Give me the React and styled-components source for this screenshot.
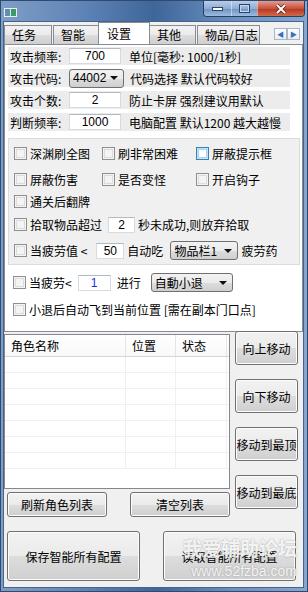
import styled, { createGlobalStyle } from 'styled-components'

const Global = createGlobalStyle`
    html, body { margin: 0; padding: 0; background: #6f93c2; }
    body { font-family: "Noto Sans CJK SC", "Liberation Sans", sans-serif; font-size: 12px; color: #000; }
    * { box-sizing: border-box; }
`;

const Window = styled.div`
    width: 308px;
    height: 592px;
    display: flex;
    flex-direction: column;
    background: linear-gradient(90deg, #7f9ec6 0%, #5a80b3 30%, #3f6699 50%, #6a8ec0 75%, #86a6cf 100%);
    border: 1px solid #2f4a6e;
    overflow: hidden;
`;

const TitleBar = styled.div`
    height: 20px;
    display: flex;
    justify-content: space-between;
    align-items: flex-start;
    padding-left: 3px;
`;

const AppIcon = styled.div`
    margin-top: 7px;
    width: 13px;
    height: 9px;
    background: linear-gradient(90deg, #5d8fb0 0 45%, #d9e4ea 45% 55%, #3d9a63 55%);
    border: 1px solid #e9eef3;
`;

const Controls = styled.div`
    display: flex;
    margin-right: 2px;
    border: 1px solid #26405f;
    border-top: none;
    border-radius: 0 0 4px 4px;
    overflow: hidden;
    height: 16px;
`;

const Ctrl = styled.div`
    width: ${p => p.$w}px;
    display: flex;
    align-items: center;
    justify-content: center;
    border-left: 1px solid rgba(255,255,255,0.45);
    background: ${p => p.$close
        ? 'linear-gradient(#e39b8e, #c9503c 50%, #b33620 51%, #d06a4d)'
        : 'linear-gradient(#b9cde6, #8eaed6 50%, #6e92c4 51%, #9cbbe0)'};
    &:first-child { border-left: none; }
`;

const Client = styled.div`
    flex: 1;
    margin: 0 3px 3px 2px;
    background: #f0f0f0;
    border: 1px solid #44648c;
    display: flex;
    flex-direction: column;
`;

const TabStrip = styled.div`
    height: 22px;
    display: flex;
    align-items: flex-end;
    position: relative;
`;

const Tab = styled.div`
    height: ${p => p.$active ? 22 : 19}px;
    width: ${p => p.$w}px;
    margin-right: ${p => p.$active ? -1 : 1}px;
    margin-left: ${p => p.$active ? -2 : 0}px;
    padding-left: ${p => p.$active ? 8 : 7}px;
    display: flex;
    align-items: center;
    border: 1px solid #898c95;
    border-bottom: none;
    background: ${p => p.$active ? '#fff' : 'linear-gradient(#f2f2f2, #ebebeb 50%, #dddddd 51%, #cfcfcf)'};
    position: relative;
    z-index: ${p => p.$active ? 2 : 1};
    font-size: 12px;
    line-height: 1;
`;

const Arrows = styled.div`
    margin-left: auto;
    margin-right: 3px;
    margin-bottom: 4px;
    display: flex;
`;

const ArrowBtn = styled.div`
    width: 13px;
    height: 12px;
    border: 1px solid #a7b6c9;
    background: linear-gradient(#fbfcfd, #e8eef5);
    color: #3b6fb3;
    font-size: 7px;
    display: flex;
    align-items: center;
    justify-content: center;
`;

const TabPage = styled.div`
    height: 288px;
    background: #fff;
    border: 1px solid #898c95;
    display: flex;
    flex-direction: column;
    padding: 2px 2px 0 3px;
`;

const Rows = styled.div`
    display: flex;
    flex-direction: column;
    gap: 4px;
    padding-right: 10px;
`;

const Row = styled.div`
    height: 18px;
    display: flex;
    align-items: center;
    background: #ececec;
`;

const Label = styled.span`
    width: ${p => p.$w || 61}px;
    padding-left: 2px;
    white-space: nowrap;
`;

const Edit = styled.div`
    width: ${p => p.$w}px;
    height: ${p => p.$h || 16}px;
    background: #fff;
    border: 1px solid #d5dbe2;
    border-top-color: #b4b8bf;
    display: flex;
    align-items: center;
    justify-content: center;
    font-family: "Liberation Sans", "DejaVu Sans", sans-serif;
    font-size: 12px;
    color: ${p => p.$blue ? '#1a32d6' : '#000'};
    margin: 0 ${p => p.$mr ?? 8}px 0 ${p => p.$ml ?? 0}px;
    flex: none;
`;

const Combo = styled.div`
    width: ${p => p.$w}px;
    height: 19px;
    border: 1px solid #707070;
    border-radius: 3px;
    background: linear-gradient(#f2f2f2, #ebebeb 50%, #dddddd 51%, #cfcfcf);
    display: flex;
    align-items: center;
    padding-left: 3px;
    padding-right: 5px;
    margin: 0 ${p => p.$mr ?? 6}px 0 ${p => p.$ml ?? 0}px;
    font-family: ${p => p.$latin ? '"Liberation Sans", sans-serif' : 'inherit'};
    font-size: 12px;
    flex: none;
    &::after {
        content: '';
        margin-left: auto;
        border-left: 4px solid transparent;
        border-right: 4px solid transparent;
        border-top: 4px solid #111;
    }
`;

const Desc = styled.span`
    white-space: nowrap;
`;

const CheckPanel = styled.div`
    margin-top: 7px;
    height: 127px;
    background: #f0f0f0;
    border: 1px solid #dcdcdc;
    padding: 8px 0 0 5px;
    display: flex;
    flex-direction: column;
`;

const CheckGrid = styled.div`
    display: grid;
    grid-template-columns: 88px 94px auto;
    row-gap: 13px;
    margin-bottom: 9px;
`;

const CheckLine = styled.div`
    display: flex;
    align-items: center;
    height: ${p => p.$h || 13}px;
    margin-bottom: ${p => p.$mb || 0}px;
    white-space: nowrap;
`;

const Box = styled.span`
    width: 13px;
    height: 13px;
    flex: none;
    margin-right: 3px;
    border: 1px solid ${p => p.$hover ? '#3c7fb1' : '#8e8f8f'};
    background: ${p => p.$hover ? '#fff' : '#f4f4f4'};
    box-shadow: inset 0 0 0 1px ${p => p.$hover ? '#c3e3f8' : '#f4f4f4'}, inset 0 0 0 2px ${p => p.$hover ? '#a8d5f5' : '#dcdcdc'};
`;

const Section = styled.div`
    padding: 9px 0 0 5px;
    display: flex;
    flex-direction: column;
    gap: 10px;
`;

const Lower = styled.div`
    display: flex;
    padding: 2px 5px 0 0;
    gap: 5px;
`;

const ListCol = styled.div`
    width: 227px;
    display: flex;
    flex-direction: column;
`;

const ListView = styled.div`
    height: 155px;
    background: #fff;
    border: 1px solid #828790;
    overflow: hidden;
`;

const Header = styled.div`
    height: 22px;
    display: grid;
    grid-template-columns: 121px 50px 51px auto;
    background: linear-gradient(#fff, #f7f8f9);
    border-bottom: 1px solid #d5d5d5;
`;

const HeadCell = styled.div`
    padding-left: 6px;
    display: flex;
    align-items: center;
    border-right: 1px solid #e5e5e5;
`;

const GridRow = styled.div`
    height: 16px;
    display: grid;
    grid-template-columns: 121px 50px 51px auto;
    border-bottom: 1px solid #f0f0f0;
`;

const GridCell = styled.div`
    border-right: 1px solid #f0f0f0;
`;

const ListButtons = styled.div`
    display: flex;
    justify-content: space-between;
    margin-top: 3px;
    padding-left: 3px;
`;

const Button = styled.div`
    width: ${p => p.$w}px;
    height: ${p => p.$h}px;
    border: 1px solid #707070;
    border-radius: 3px;
    background: linear-gradient(#f2f2f2, #ebebeb 50%, #dddddd 51%, #cfcfcf);
    box-shadow: inset 0 0 0 1px #fcfcfc;
    display: flex;
    align-items: center;
    justify-content: center;
    white-space: nowrap;
    font-size: 12px;
    position: relative;
    flex: none;
`;

const SideButtons = styled.div`
    margin-top: -3px;
    display: flex;
    flex-direction: column;
    gap: 14px;
`;

const BigRow = styled.div`
    display: flex;
    justify-content: space-between;
    padding: 14px 7px 0 3px;
`;

const Watermark = styled.div`
    position: absolute;
    right: -2px;
    top: 4px;
    width: 112px;
    display: flex;
    flex-direction: column;
    align-items: flex-end;
    color: rgba(255,255,255,0.85);
    text-shadow: 0 0 2px rgba(120,120,120,0.6);
    pointer-events: none;
`;

const WmBig = styled.span`
    font-size: 19px;
    font-weight: bold;
    line-height: 24px;
`;

const WmSmall = styled.span`
    font-family: "Liberation Sans", sans-serif;
    font-size: 14px;
    line-height: 16px;
    margin-top: 3px;
`;

const CheckItem = ({ label, hover }) => (
    <CheckLine><Box $hover={hover} />{label}</CheckLine>
)

const App = () => {
    const rows = [1, 2, 3, 4, 5, 6, 7]
    return (
        <Window>
            <Global />
            <TitleBar>
                <AppIcon />
                <Controls>
                    <Ctrl $w={27}><svg width="11" height="4"><rect x="0.5" y="0.5" width="10" height="3" fill="#fff" stroke="#2c4468" /></svg></Ctrl>
                    <Ctrl $w={26}><svg width="11" height="9"><rect x="0.5" y="0.5" width="10" height="8" fill="none" stroke="#2c4468" /><rect x="1.5" y="1.5" width="8" height="6" fill="none" stroke="#c7d7ea" /></svg></Ctrl>
                    <Ctrl $w={47} $close><svg width="12" height="10" viewBox="0 0 12 10"><path d="M2 1 L10 9 M10 1 L2 9" stroke="#5a1a10" strokeWidth="3.4" /><path d="M2 1 L10 9 M10 1 L2 9" stroke="#fff" strokeWidth="2" /></svg></Ctrl>
                </Controls>
            </TitleBar>
            <Client>
                <TabStrip>
                    <Tab $w={48}>任务</Tab>
                    <Tab $w={46}>智能</Tab>
                    <Tab $w={52} $active>设置</Tab>
                    <Tab $w={47}>其他</Tab>
                    <Tab $w={63}>物品/日志</Tab>
                    <Arrows>
                        <ArrowBtn>◀</ArrowBtn>
                        <ArrowBtn>▶</ArrowBtn>
                    </Arrows>
                </TabStrip>
                <TabPage>
                    <Rows>
                        <Row><Label>攻击频率:</Label><Edit $w={52}>700</Edit><Desc>单位[毫秒: 1000/1秒]</Desc></Row>
                        <Row><Label>攻击代码:</Label><Combo $w={55} $latin>44002</Combo><Desc>代码选择 默认代码较好</Desc></Row>
                        <Row><Label>攻击个数:</Label><Edit $w={52}>2</Edit><Desc>防止卡屏 强烈建议用默认</Desc></Row>
                        <Row><Label>判断频率:</Label><Edit $w={52}>1000</Edit><Desc>电脑配置 默认1200 越大越慢</Desc></Row>
                    </Rows>
                    <CheckPanel>
                        <CheckGrid>
                            <CheckItem label="深渊刷全图" />
                            <CheckItem label="刷非常困难" />
                            <CheckItem label="屏蔽提示框" hover />
                            <CheckItem label="屏蔽伤害" />
                            <CheckItem label="是否变怪" />
                            <CheckItem label="开启钩子" />
                        </CheckGrid>
                        <CheckLine $mb={10}><Box />通关后翻牌</CheckLine>
                        <CheckLine $mb={13}><Box />拾取物品超过<Edit $w={27} $ml={6} $mr={3}>2</Edit>秒未成功,则放弃拾取</CheckLine>
                        <CheckLine><Box />当疲劳值 &lt;<Edit $w={28} $ml={9} $mr={3}>50</Edit>自动吃<Combo $w={68} $ml={7} $mr={3}>物品栏1</Combo>疲劳药</CheckLine>
                    </CheckPanel>
                    <Section>
                        <CheckLine $h={17}><Box />当疲劳&lt;<Edit $w={33} $ml={6} $mr={6} $blue>1</Edit>进行<Combo $w={82} $ml={10}>自動小退</Combo></CheckLine>
                        <CheckLine $h={16}><Box />小退后自动飞到当前位置 [需在副本门口点]</CheckLine>
                    </Section>
                </TabPage>
                <Lower>
                    <ListCol>
                        <ListView>
                            <Header>
                                <HeadCell>角色名称</HeadCell>
                                <HeadCell>位置</HeadCell>
                                <HeadCell>状态</HeadCell>
                                <div />
                            </Header>
                            {rows.map(r => (
                                <GridRow key={r}>
                                    <GridCell /><GridCell /><GridCell /><div />
                                </GridRow>
                            ))}
                        </ListView>
                        <ListButtons>
                            <Button $w={100} $h={25}>刷新角色列表</Button>
                            <Button $w={100} $h={25}>清空列表</Button>
                        </ListButtons>
                    </ListCol>
                    <SideButtons>
                        <Button $w={63} $h={34}>向上移动</Button>
                        <Button $w={63} $h={34}>向下移动</Button>
                        <Button $w={63} $h={34}>移动到最顶</Button>
                        <Button $w={63} $h={34}>移动到最底</Button>
                    </SideButtons>
                </Lower>
                <BigRow>
                    <Button $w={133} $h={50}>保存智能所有配置</Button>
                    <Button $w={133} $h={50}>
                        读取智能所有配置
                        <Watermark>
                            <WmBig>我爱辅助论坛</WmBig>
                            <WmSmall>www.52fzba.com</WmSmall>
                        </Watermark>
                    </Button>
                </BigRow>
            </Client>
        </Window>
    )
}

export default App
